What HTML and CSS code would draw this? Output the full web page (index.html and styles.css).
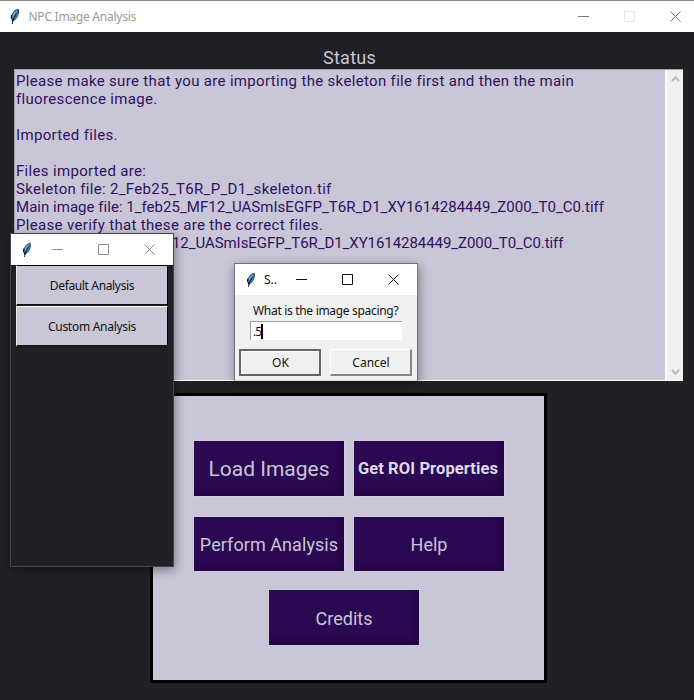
FILE: index.html
```
<!DOCTYPE html>
<html lang="en">
<head>
<meta charset="utf-8">
<title>NPC Image Analysis</title>
<link rel="stylesheet" href="styles.css">
</head>
<body>
<svg width="0" height="0" class="defs">
  <symbol id="feather" viewBox="0 0 10 17">
    <path d="M8.700.800C6 .9 3.200 3.500 2 6.300c-.9 2-.9 4.400-.2 6.400L3 13.300c2.800-1.600 4.800-3.800 5.500-6.300.6-2.100.8-4.200.2-6.200Z" fill="#1d3a58"/>
    <path d="M8 1.500C5.500 3 3.300 4.700 2.600 6.900l-.3 4.400C4.300 9 6.200 5.500 8 1.500Z" fill="#6fb0ea"/>
    <path d="M8.300 2.500 6 7.300l-2.200 4.300c2.200-1.200 3.700-2.900 4.100-4.900Z" fill="#4684c0"/>
    <path d="M6.500 5 3 11l-.7 5" fill="none" stroke="#0c1118" stroke-width=".9"/>
    <path d="m1.500 7-.3 3.500M2 12.500l1.500.5" stroke="#070a0d" stroke-width="1.100"/>
  </symbol>
  <symbol id="min" viewBox="0 0 11 11"><path d="M0 5.500h11" stroke="currentColor" fill="none"/></symbol>
  <symbol id="max" viewBox="0 0 11 11"><path d="M.5.500h10v10H.5Z" stroke="currentColor" fill="none"/></symbol>
  <symbol id="close" viewBox="0 0 11 11"><path d="m.5.500 10 10m0-10-10 10" stroke="currentColor" fill="none"/></symbol>
  <symbol id="chev" viewBox="0 0 8 7"><path d="M.8 5.500 4 2l3.200 3.500" stroke="currentColor" stroke-width="1.900" fill="none"/></symbol>
</svg>
<div class="app">
  <header class="titlebar">
    <svg class="feather"><use href="#feather"/></svg>
    <span class="title">NPC Image Analysis</span>
    <div class="controls"><svg><use href="#min"/></svg><svg class="disabled"><use href="#max"/></svg><svg><use href="#close"/></svg></div>
  </header>
  <h1>Status</h1>
  <section class="status">
    <div class="log">
      <p>Please make sure that you are importing the skeleton file first and then the main</p>
      <p>fluorescence image.</p>
      <p></p>
      <p>Imported files.</p>
      <p></p>
      <p>Files imported are:</p>
      <p>Skeleton file: 2_Feb25_T6R_P_D1_skeleton.tif</p>
      <p class="path">Main image file: 1_feb25_MF12_UASmIsEGFP_T6R_D1_XY1614284449_Z000_T0_C0.tiff</p>
      <p>Please verify that these are the correct files.</p>
      <p class="tail">12_UASmIsEGFP_T6R_D1_XY1614284449_Z000_T0_C0.tiff</p>
    </div>
    <div class="scrollbar"><svg><use href="#chev"/></svg><svg class="down"><use href="#chev"/></svg></div>
  </section>
  <main class="panel">
    <div class="grid">
      <button class="load">Load Images</button>
      <button class="roi">Get ROI Properties</button>
      <button class="perform">Perform Analysis</button>
      <button>Help</button>
    </div>
    <button class="credits">Credits</button>
  </main>
</div>

<div class="window chooser">
  <header class="titlebar">
    <svg class="feather"><use href="#feather"/></svg>
    <div class="controls"><svg><use href="#min"/></svg><svg><use href="#max"/></svg><svg><use href="#close"/></svg></div>
  </header>
  <div class="options">
    <button>Default Analysis</button>
    <button>Custom Analysis</button>
  </div>
</div>

<div class="window dialog">
  <header class="titlebar">
    <svg class="feather"><use href="#feather"/></svg>
    <span class="title">S..</span>
    <div class="controls"><svg><use href="#min"/></svg><svg><use href="#max"/></svg><svg><use href="#close"/></svg></div>
  </header>
  <label>What is the image spacing?</label>
  <div class="field">.5<i></i></div>
  <div class="actions"><button class="ok">OK</button><button>Cancel</button></div>
</div>
</body>
</html>
```
FILE: styles.css
```
* { box-sizing: border-box; }
body { margin: 0; width: 694px; height: 700px; overflow: hidden; background: #212024; font-family: "Noto Sans", sans-serif; }
svg { display: block; flex: none; }
.defs { position: absolute; }
button { border: 0; border-radius: 0; padding: 0; margin: 0; white-space: nowrap; }
.titlebar { display: flex; align-items: center; background: #fff; }
.feather { width: 10px; height: 17px; }
.controls { display: flex; margin-left: auto; }
.controls svg { width: 11px; height: 11px; }

.app { height: 700px; }
.app > .titlebar { height: 32px; border-top: 1px solid #888; padding: 0 13px 0 10px; }
.app > .titlebar .title { margin-left: 8.500px; color: #999; font-size: 12px; letter-spacing: -0.25px; }
.app > .titlebar .controls { gap: 35px; color: #777; }
.controls .disabled { color: #e5e5e5; }
h1 { margin: 15px 0 0; height: 22px; padding-left: 5px; text-align: center; font: 400 18px/22px Roboto, sans-serif; color: #c8c6d7; letter-spacing: .25px; }
.status { display: flex; width: 669px; height: 312px; margin-left: 14px; background: #c8c6d7; border: 1px solid #a3a1ae; border-right: 0; border-bottom-color: #fff; }
.log { flex: 1; padding: 2px 0 0 1px; font: 15px/18px Roboto, sans-serif; color: #32105f; white-space: nowrap; letter-spacing: .33px; }
.log p { margin: 0; height: 18.050px; }
.log .path { letter-spacing: .03px; }
.log .tail { padding-left: 156px; letter-spacing: -.06px; }
.scrollbar { width: 18px; display: flex; flex-direction: column; justify-content: space-between; align-items: center; padding: 5px 0 4px; background: #f0f0f0; border-left: 2px solid #fff; color: #b9b9b9; }
.scrollbar svg { width: 9px; height: 8px; }
.scrollbar .down { transform: rotate(180deg); }

.panel { display: flex; flex-direction: column; width: 397px; height: 290px; margin: 12px 0 0 150px; padding: 45px 0 0 41px; border: 3px solid #000; background: #c8c6d7; }
.grid { display: grid; grid-template-columns: 150px 150px; grid-template-rows: 55px 54px; gap: 21px 10px; }
.panel button { width: 150px; height: 100%; background: #2b0852; color: #c8c6d7; font: 18px Roboto, sans-serif; box-shadow: inset -7px -7px 8px -4px #21063f, 0 0 1px #efedff; }
.panel .load { font-size: 21px; }
.panel .perform { letter-spacing: .07px; }
.panel .roi { font-size: 16.500px; font-weight: 700; letter-spacing: .1px; padding: 0 2px 0 0; color: #dddbe8; }
.panel .credits { height: 55px; margin: 19px 0 0 75px; padding-top: 1px; }

.window { position: absolute; box-shadow: 1px 3px 10px rgba(0,0,0,.4); }
.chooser { left: 10px; top: 233px; width: 164px; height: 334px; background: #212024; border: 1px solid #45444a; }
.chooser .titlebar { height: 31px; padding: 0 18px 0 11px; }
.chooser .feather { height: 16px; }
.chooser .controls { gap: 35px; color: #8d8d8d; }
.options { display: flex; flex-direction: column; margin-left: 5px; width: 152px; }
.options button { height: 41px; background: #c8c6d7; border: 1px solid #000; border-left-color: #eee; border-right-width: 1px; border-bottom: 2px solid #17161a; color: #111; font: 12px "Noto Sans", sans-serif; letter-spacing: -.35px; }
.options button + button { border-top: 1px solid #fff; letter-spacing: -.28px; }

.dialog { left: 234px; top: 263px; width: 184px; height: 118px; background: #f0f0f0; border: 1px solid #74737d; border-bottom-color: #ddd; font-size: 12px; color: #111; }
.dialog .titlebar { height: 31px; padding: 0 18px 0 11px; }
.dialog .feather { height: 16px; }
.dialog .title { margin-left: 8px; }
.dialog .controls { gap: 35px; color: #111; }
.dialog label { display: block; margin: 7px 0 0 18px; line-height: 18px; white-space: nowrap; letter-spacing: -.31px; }
.field { display: flex; align-items: center; width: 152px; height: 19px; margin: 1px 0 0 15px; padding-left: 2px; background: #fff; border-top: 1px solid #a0a0a0; border-left: 1px solid #a0a0a0; letter-spacing: -1px; }
.field i { width: 2px; height: 15px; background: #000; }
.actions { display: flex; gap: 9px; margin: 9px 0 0 4px; }
.actions button { width: 82px; height: 27px; background: #f0f0f0; border: 1px solid #fff; border-right: 2px solid #858585; border-bottom: 2px solid #858585; color: #111; font: 12px "Noto Sans", sans-serif; padding-left: 1px; }
.actions .ok { border: 2px solid #646464; box-shadow: inset 1px 1px #fff; }
```
